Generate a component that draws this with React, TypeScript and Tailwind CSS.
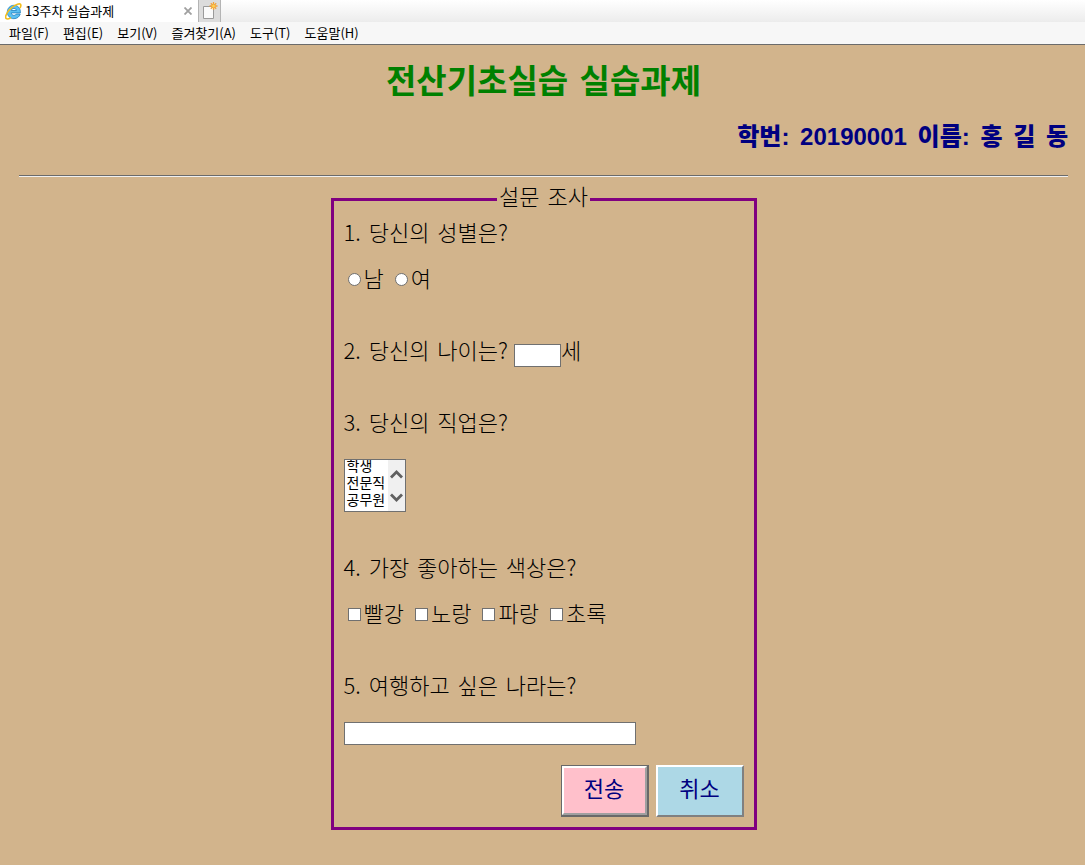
import React from "react";

const menus = ["파일(F)", "편집(E)", "보기(V)", "즐겨찾기(A)", "도구(T)", "도움말(H)"];
const colors = ["빨강", "노랑", "파랑", "초록"];
const genders = ["남", "여"];
const jobs = ["학생", "전문직", "공무원"];

function BrowserLogo() {
  return (
    <svg viewBox="0 0 17 17" className="h-[17px] w-[17px] shrink-0" aria-hidden="true">
      <path
        d="M15.200 11c-.8 2.900-3.200 4.700-6.300 4.700-3.900 0-6.600-2.800-6.600-6.600s2.800-6.800 6.600-6.800c4.100 0 6.700 3 6.500 7.600H6.300c.1 1.500 1.200 2.500 2.700 2.500 1.100 0 1.900-.5 2.300-1.400zM6.400 7.500h5c-.2-1.300-1.100-2.100-2.500-2.100s-2.300.8-2.500 2.100z"
        fill="#5cc0f0"
        stroke="#1c7fc0"
        strokeWidth=".8"
      />
      <path
        d="M15 5.200c1.100-2.300 1.200-3.700.1-4.200C12.800.2 7.500 3.400 4 7.300.9 10.800-.2 14.600 1.300 15.700c1 .7 2.700.1 4.600-1.100"
        fill="none"
        stroke="#f2bd1d"
        strokeWidth="1.600"
      />
    </svg>
  );
}

function NewTabIcon() {
  return (
    <svg viewBox="0 0 16 18" className="h-[18px] w-4" aria-hidden="true">
      <path d="M1.500 4.500h10v12h-10z" fill="#fafafa" stroke="#9a9a9a" />
      <path d="M11.500 0v8M7.500 4h8M8.800 1.300l5.400 5.400M14.200 1.300L8.800 6.700" stroke="#f2a33a" strokeWidth="1.300" />
      <circle cx="11.500" cy="4" r="1.500" fill="#ffd04f" />
    </svg>
  );
}

function Words({ text, gap = "ml-[3px]" }: { text: string; gap?: string }) {
  return (
    <>
      {text.split(" ").map((word, i) => (
        <React.Fragment key={i}>
          {i > 0 && " "}
          <span className={i > 0 ? gap : ""}>{word}</span>
        </React.Fragment>
      ))}
    </>
  );
}

function Question({ children }: { children: React.ReactNode }) {
  return <div className="flex h-7 items-center pb-1">{children}</div>;
}

export default function App() {
  return (
    <div className="flex min-h-screen flex-col bg-[#d2b48c] font-['Noto_Sans_CJK_KR',sans-serif] text-black">
      <header className="border-b border-[#6b6b6b] bg-[#f7f7f7] text-[13px]">
        <div className="flex h-[22px] items-stretch bg-linear-to-b from-white to-[#ececec]">
          <div className="flex w-[198px] items-center bg-white pr-1 pl-[5px]">
            <BrowserLogo />
            <span className="ml-[3px] flex-1 leading-[22px]">13주차 실습과제</span>
            <button type="button" aria-label="탭 닫기" className="flex h-3 w-3 items-center justify-center">
              <svg viewBox="0 0 8 8" className="h-2 w-2" aria-hidden="true">
                <path d="M.5.5l7 7M7.500.5l-7 7" stroke="#a0a0a0" strokeWidth="1.800" />
              </svg>
            </button>
          </div>
          <button
            type="button"
            aria-label="새 탭"
            className="flex w-[23px] items-center justify-center border-x border-[#b4b4b4] bg-[#dcdcdc]"
          >
            <NewTabIcon />
          </button>
        </div>
        <nav className="flex h-[22px] items-center gap-[14px] px-[9px]">
          {menus.map((m) => (
            <button key={m} type="button" className="leading-[22px]">
              {m}
            </button>
          ))}
        </nav>
      </header>

      <main className="pt-4 pr-[17px] pb-9 pl-[19px]">
        <h1 className="text-center text-[33px] leading-9 font-bold text-[#008000]">
          <Words text="전산기초실습 실습과제" gap="ml-1" />
        </h1>
        <h2 className="mt-6 text-right font-['Liberation_Sans','Noto_Sans_CJK_KR',sans-serif] text-[24px] leading-8 font-black text-[#000080]">
          <Words text="학번: 20190001 이름: 홍 길 동" gap="ml-1" />
        </h2>
        <hr className="mt-[22px] border-t border-b border-t-[#6b6b6b] border-b-[#f0f0f0]" />

        <form className="mt-[10px]" onSubmit={(e) => e.preventDefault()}>
          <fieldset className="mx-auto w-[426px] max-w-full border-[3px] border-[#800080] px-[10px] pb-[10px] text-[22px] leading-7 font-light">
            <legend className="mx-auto px-0.5 pb-2 leading-4">
              <Words text="설문 조사" />
            </legend>

            <div className="mt-2">
              <Question>
                <span>
                  <Words text="1. 당신의 성별은?" />
                </span>
              </Question>
              <div className="mt-[18px] flex h-7 items-center gap-[11px] pl-1">
                {genders.map((g) => (
                  <label key={g} className="flex items-center gap-[3px]">
                    <input
                      type="radio"
                      name="gender"
                      className="h-[13px] w-[13px] appearance-none rounded-full border border-[#707070] bg-white checked:border-4"
                    />
                    <span className="pb-1">{g}</span>
                  </label>
                ))}
              </div>
            </div>

            <div className="mt-11">
              <Question>
                <label htmlFor="age">
                  <Words text="2. 당신의 나이는?" />
                </label>
                <input
                  id="age"
                  type="text"
                  className="mt-[13px] ml-[6px] h-[23px] w-[47px] border border-[#707070] bg-white px-1 text-[14px]"
                />
                <span>세</span>
              </Question>
            </div>

            <div className="mt-11">
              <Question>
                <label htmlFor="job">
                  <Words text="3. 당신의 직업은?" />
                </label>
              </Question>
              <div className="mt-[22px] flex h-[53px] w-[62px] border border-[#707070] bg-[#f0f0f0]">
                <select
                  id="job"
                  size={3}
                  className="h-full w-[43px] appearance-none overflow-hidden bg-white text-[14px] font-light text-black"
                >
                  {jobs.map((j) => (
                    <option key={j} className="h-[17px] min-h-0 p-0 pl-0.5 leading-[17px] first:-mt-[5px]">
                      {j}
                    </option>
                  ))}
                </select>
                <div className="flex flex-1 flex-col items-center justify-center gap-[14px]">
                  <svg viewBox="0 0 13 9" className="h-[9px] w-[13px]" aria-hidden="true">
                    <path d="M1 7.500l5.500-5.500 5.500 5.500" fill="none" stroke="#606060" strokeWidth="2.800" />
                  </svg>
                  <svg viewBox="0 0 13 9" className="h-[9px] w-[13px]" aria-hidden="true">
                    <path d="M1 1.500l5.500 5.500 5.500-5.500" fill="none" stroke="#606060" strokeWidth="2.800" />
                  </svg>
                </div>
              </div>
            </div>

            <div className="mt-[42px]">
              <Question>
                <span>
                  <Words text="4. 가장 좋아하는 색상은?" />
                </span>
              </Question>
              <div className="mt-[18px] flex h-7 items-center gap-[11px] pl-1">
                {colors.map((c) => (
                  <label key={c} className="flex items-center gap-[3px]">
                    <input
                      type="checkbox"
                      className="h-[13px] w-[13px] appearance-none border border-[#707070] bg-white checked:bg-[#606060]"
                    />
                    <span className="pb-1">{c}</span>
                  </label>
                ))}
              </div>
            </div>

            <div className="mt-11">
              <Question>
                <label htmlFor="country">
                  <Words text="5. 여행하고 싶은 나라는?" />
                </label>
              </Question>
              <input
                id="country"
                type="text"
                className="mt-[22px] block h-[23px] w-[292px] border border-[#707070] bg-white px-1 text-[14px]"
              />
            </div>

            <div className="mt-5 flex justify-end gap-[7px] text-[#000080]">
              <button
                type="submit"
                className="h-[52px] w-[88px] border border-r-2 border-b-2 border-[#696969] bg-[#ffc0cb] font-normal"
              >
                <span className="flex h-full items-center justify-center border-2 border-t-white border-r-[#a0a0a0] border-b-[#a0a0a0] border-l-white pb-2">
                  전송
                </span>
              </button>
              <button
                type="reset"
                className="h-[52px] w-[88px] border-2 border-t-white border-r-[#808080] border-b-[#808080] border-l-white bg-[#add8e6] pb-2 font-normal"
              >
                취소
              </button>
            </div>
          </fieldset>
        </form>
      </main>
    </div>
  );
}
